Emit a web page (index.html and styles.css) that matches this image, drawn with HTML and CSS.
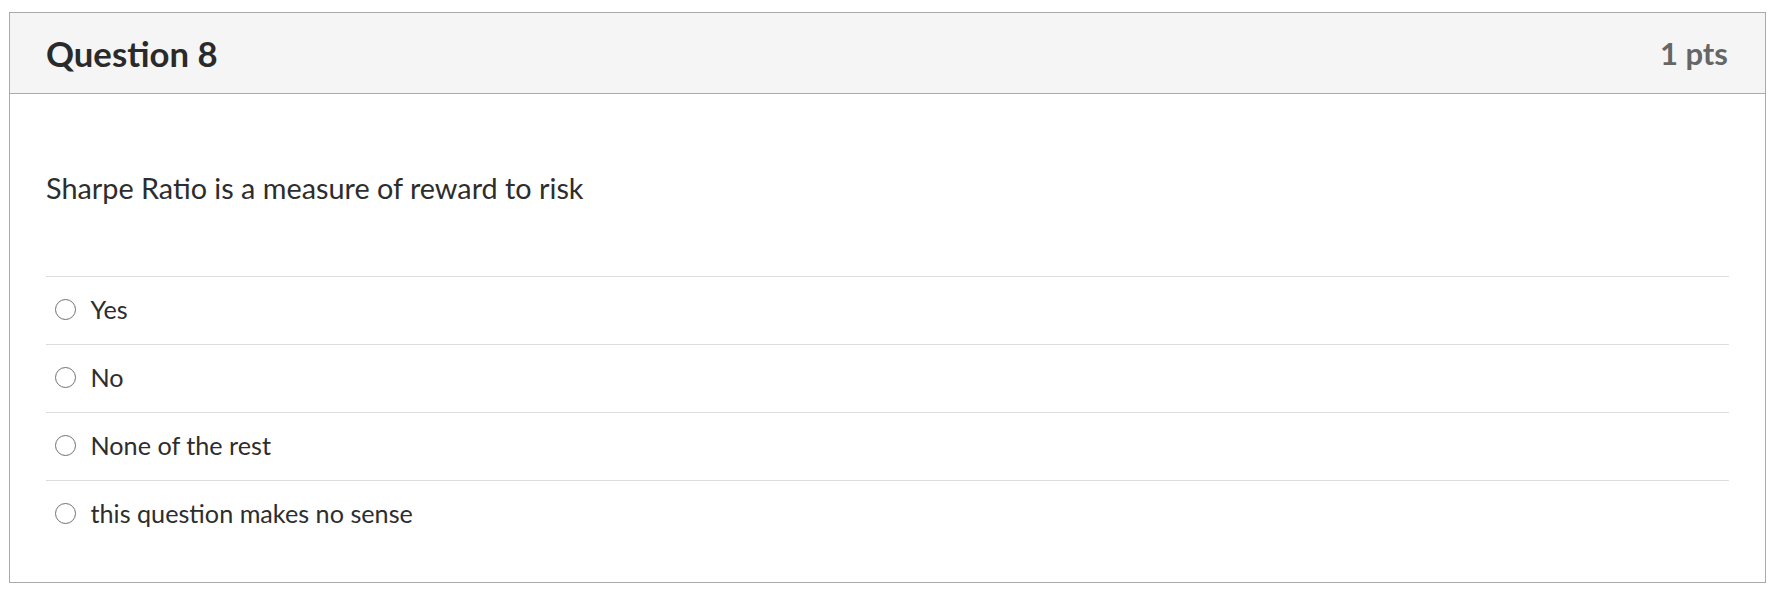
FILE: index.html
```html
<!DOCTYPE html>
<html>
<head>
<meta charset="utf-8">
<link rel="stylesheet" href="styles.css">
</head>
<body>
<div class="question">
  <div class="q-header">
    <h2 class="q-title">Question 8</h2>
    <span class="q-points">1 pts</span>
  </div>
  <div class="q-body">
    <p class="q-text">Sharpe Ratio is a measure of reward to risk</p>
    <div class="answers">
      <label class="answer"><span class="radio"></span><span class="answer-text">Yes</span></label>
      <label class="answer"><span class="radio"></span><span class="answer-text">No</span></label>
      <label class="answer"><span class="radio"></span><span class="answer-text">None of the rest</span></label>
      <label class="answer"><span class="radio"></span><span class="answer-text">this question makes no sense</span></label>
    </div>
  </div>
</div>
</body>
</html>
```

FILE: styles.css
```css
html, body {
  background: #ffffff;
}
body {
  margin: 12px 20px 0 9px;
  font-family: Lato, "Noto Sans", sans-serif;
  color: #2d2d2d;
}
.question {
  border: 1px solid #aaaaaa;
  box-sizing: border-box;
  height: 571px;
}
.q-header {
  height: 80px;
  background: #f5f5f5;
  border-bottom: 1px solid #aaaaaa;
  display: flex;
  align-items: center;
  justify-content: space-between;
  padding: 0 37px 0 36px;
}
.q-title {
  margin: 0;
  font-size: 34.7px;
  font-weight: 700;
  color: #2a2a2a;
}
.q-points {
  font-size: 31px;
  font-weight: 700;
  color: #666666;
}
.q-body {
  padding: 77px 36px 35px 36px;
}
.q-text {
  margin: 0 0 71px 0;
  font-size: 28.8px;
  line-height: 34px;
}
.answers {
  display: flex;
  flex-direction: column;
}
.answer {
  display: flex;
  align-items: flex-start;
  border-top: 1px solid #dddddd;
  padding: 15px 0 18px 8.5px;
  font-size: 25.2px;
  line-height: 34px;
}
.radio {
  width: 21px;
  height: 21px;
  box-sizing: border-box;
  border: 1.8px solid #707070;
  border-radius: 50%;
  margin-top: 7px;
  margin-right: 15px;
  flex: none;
}
```
